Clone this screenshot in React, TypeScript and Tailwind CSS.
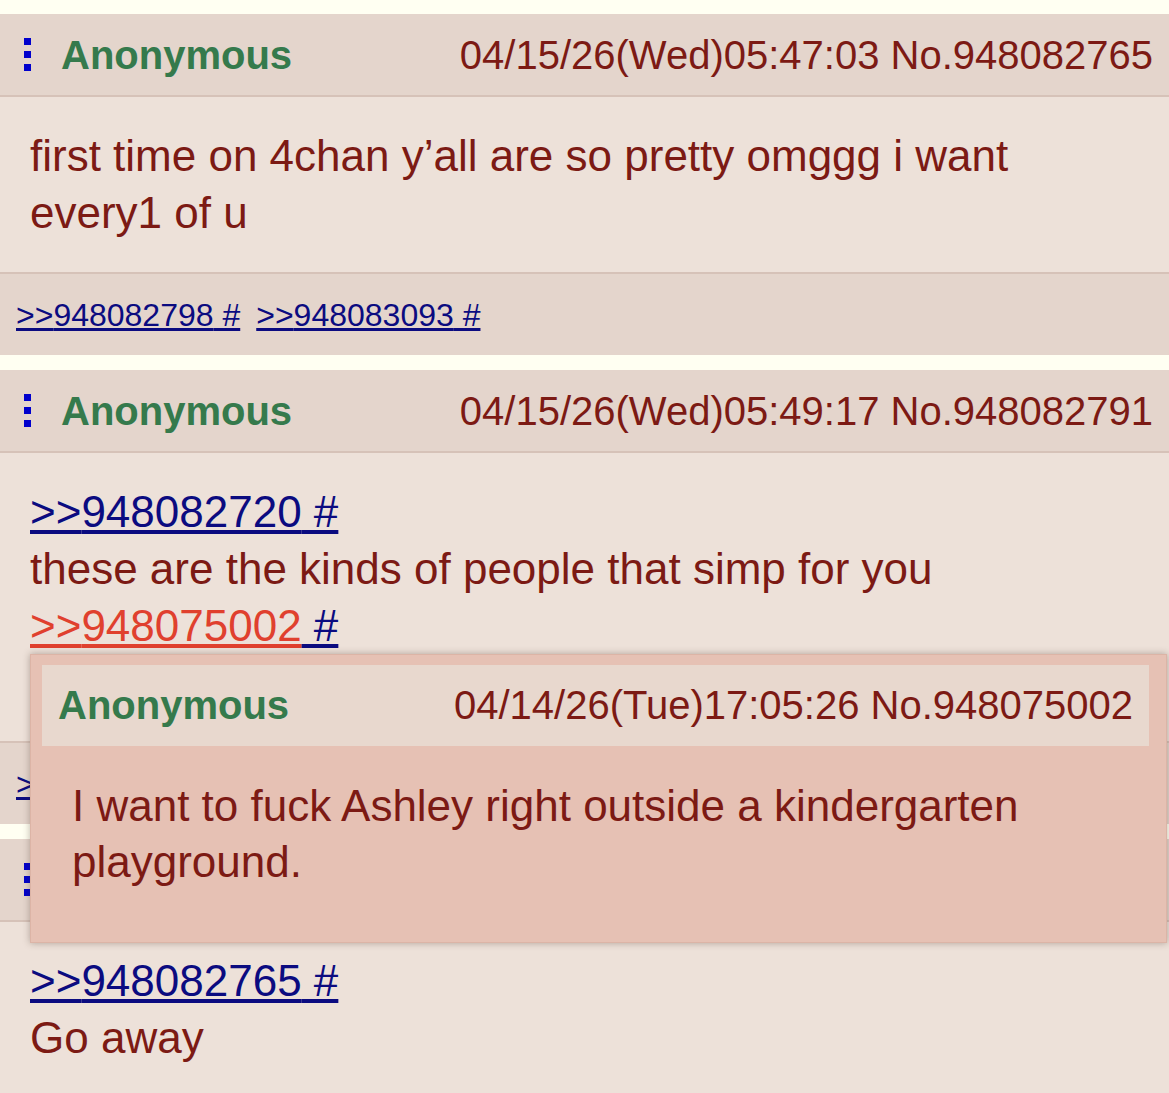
import React from 'react';

type Reply = { id: string };

const Dots = () => (
  <div className="flex w-[7px] flex-col gap-[6px]">
    <span className="block h-[7px] w-[7px] bg-[#0000cc]" />
    <span className="block h-[7px] w-[7px] bg-[#0000cc]" />
    <span className="block h-[7px] w-[7px] bg-[#0000cc]" />
  </div>
);

const PostHeader = ({ date, no }: { date: string; no: string }) => (
  <div className="flex h-[83px] items-center justify-between border-b-2 border-[#d6c2b8] bg-[#e4d5cc] pl-[24px] pr-[16px]">
    <div className="flex items-center gap-[30px]">
      <Dots />
      <span className="text-[40px] font-bold text-[#357a4c]">Anonymous</span>
    </div>
    <span className="text-[40px] text-[#7c1a14]">
      {date} No.{no}
    </span>
  </div>
);

const QuoteLine = ({ id, red }: { id: string; red?: boolean }) => (
  <div>
    <span className={red ? 'text-[#e0402e] underline' : 'text-[#0b0b80] underline'}>&gt;&gt;{id}</span>
    <span className="text-[#0b0b80] underline"> #</span>
  </div>
);

const Replies = ({ replies }: { replies: Reply[] }) => (
  <div className="flex h-[83px] items-center gap-[16px] border-t-2 border-[#d6c2b8] bg-[#e4d5cc] px-[16px] text-[32px] text-[#0b0b80]">
    {replies.map((r) => (
      <span key={r.id} className="underline">
        &gt;&gt;{r.id} #
      </span>
    ))}
  </div>
);

const Popup = () => (
  <div className="absolute left-[30px] right-[2px] top-[201px] z-10 border border-[#dcb4a6] bg-[#e6c1b4] pb-[52px] pl-[11px] pr-[17px] pt-[10px] shadow-[0_0_7px_rgba(60,40,30,0.35)]">
    <div className="flex h-[81px] items-center justify-between bg-[#e8d8ce] px-[16px]">
      <span className="text-[40px] font-bold text-[#357a4c]">Anonymous</span>
      <span className="text-[40px] text-[#7c1a14]">04/14/26(Tue)17:05:26 No.948075002</span>
    </div>
    <div className="pl-[30px] pt-[32px] text-[44px] leading-[56px] text-[#7c1a14]">
      I want to fuck Ashley right outside a kindergarten
      <br />
      playground.
    </div>
  </div>
);

export default function App() {
  return (
    <div className="min-h-screen bg-[#fffff2] pt-[14px] font-['Liberation_Sans',Arial,sans-serif]">
      <div className="flex flex-col gap-[15px]">
        <div>
          <PostHeader date="04/15/26(Wed)05:47:03" no="948082765" />
          <div className="bg-[#ede1d9] px-[30px] pb-[31px] pt-[30px] text-[44px] leading-[57px] text-[#7c1a14]">
            first time on 4chan y’all are so pretty omggg i want
            <br />
            every1 of u
          </div>
          <Replies replies={[{ id: '948082798' }, { id: '948083093' }]} />
        </div>

        <div>
          <PostHeader date="04/15/26(Wed)05:49:17" no="948082791" />
          <div className="relative bg-[#ede1d9] px-[30px] py-[30px] text-[44px] leading-[57px] text-[#7c1a14]">
            <QuoteLine id="948082720" />
            <div>these are the kinds of people that simp for you</div>
            <QuoteLine id="948075002" red />
            <div>&nbsp;</div>
            <Popup />
          </div>
          <Replies replies={[{ id: '948082812' }]} />
        </div>

        <div>
          <PostHeader date="04/15/26(Wed)05:50:02" no="948082812" />
          <div className="bg-[#ede1d9] px-[30px] pb-[40px] pt-[30px] text-[44px] leading-[57px] text-[#7c1a14]">
            <QuoteLine id="948082765" />
            <div>Go away</div>
          </div>
        </div>
      </div>
    </div>
  );
}
